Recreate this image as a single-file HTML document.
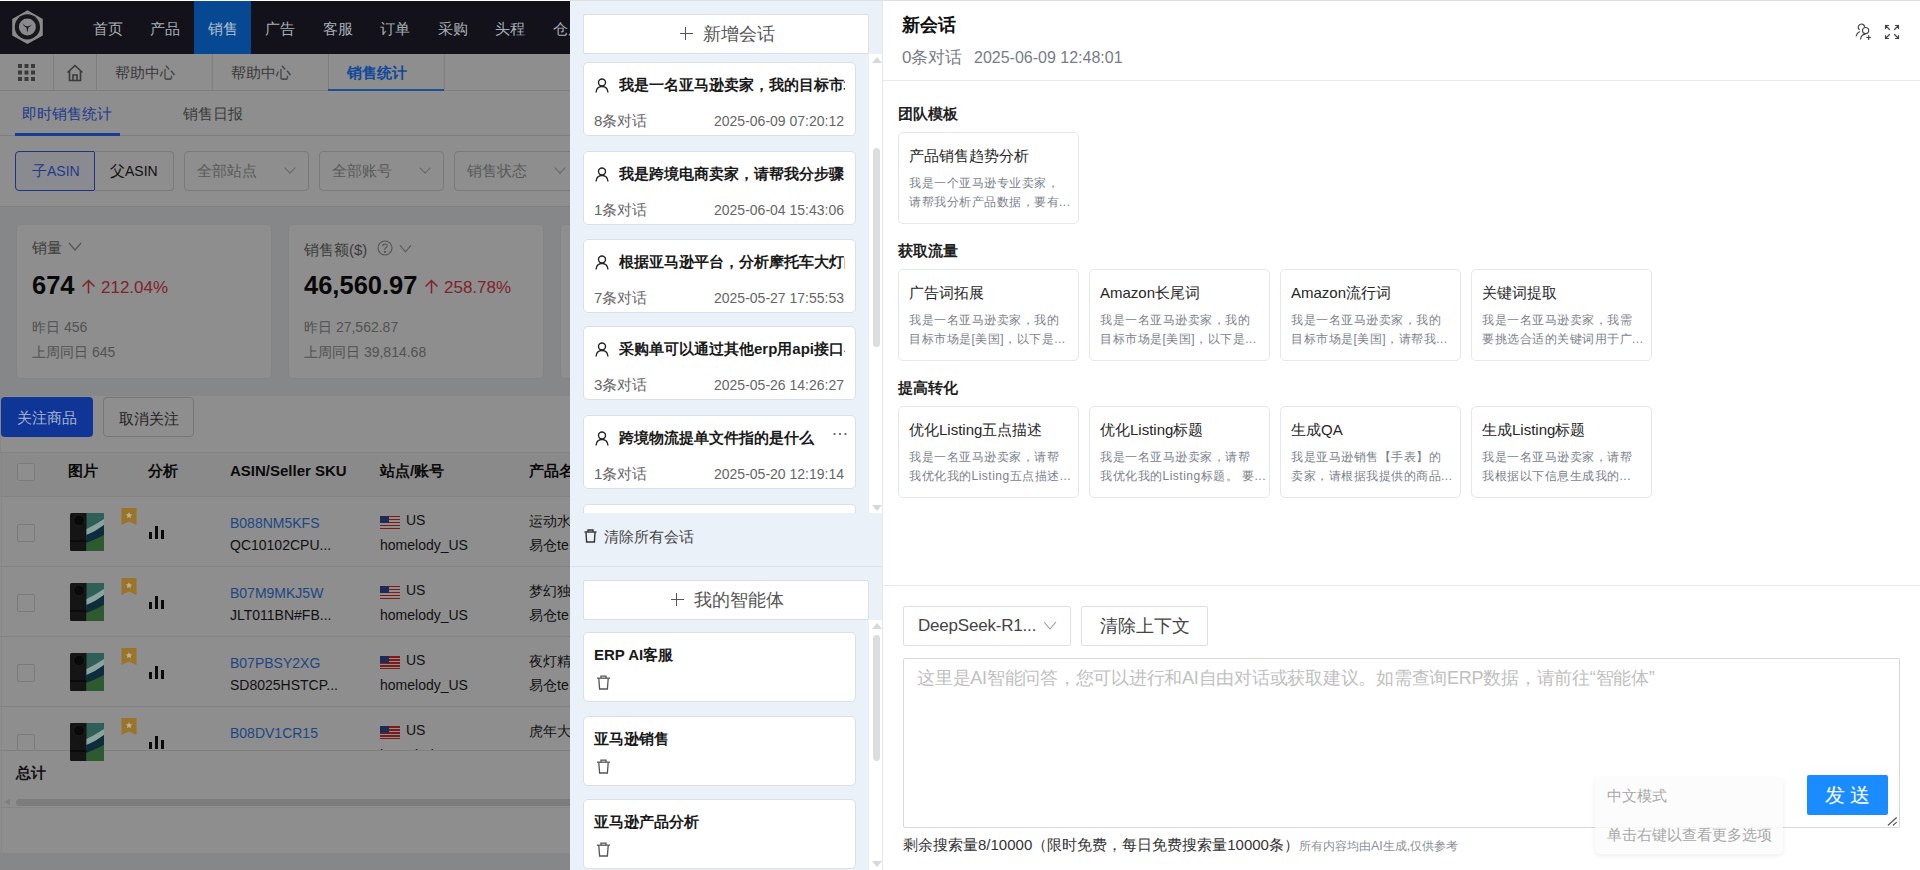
<!DOCTYPE html>
<html><head><meta charset="utf-8">
<style>
*{box-sizing:border-box;margin:0;padding:0}
html,body{width:1920px;height:870px;overflow:hidden;background:#fff;font-family:"Liberation Sans",sans-serif;}
.abs{position:absolute}
#page{position:absolute;left:0;top:0;width:570px;height:870px;overflow:hidden;background:#868789}
#topline{position:absolute;left:0;top:0;width:570px;height:1px;background:#fff}
#nav{position:absolute;left:0;top:1px;width:570px;height:53px;background:#13121a}
.mi{position:absolute;top:1px;height:52px;line-height:53px;font-size:15px;color:#a9afb6;width:57.5px;text-align:center}
.mi.on{background:#064891;color:#b4c0cc;top:0;height:53px;line-height:55px}
#tabs{position:absolute;left:0;top:54px;width:570px;height:37px;background:#8e8e8e;border-bottom:1px solid #7e7e7e}
.tsep{position:absolute;top:0;width:1px;height:37px;background:#7f7f7f}
.tt{position:absolute;top:1px;line-height:36px;font-size:15px;color:#3a3a3a}
#filter{position:absolute;left:0;top:91px;width:570px;height:116px;background:#8e8e8e;border-bottom:1px solid #808080}
.sel{position:absolute;top:151px;height:40px;border:1px solid #7a7a7a;border-radius:4px;font-size:15px;line-height:38px;color:#5a5a5a;padding-left:12px}
.chev{position:absolute;width:8px;height:8px;border-right:1px solid #666;border-bottom:1px solid #666;transform:rotate(45deg)}
.scard{position:absolute;top:224px;height:155px;background:#8e8e8e;border-radius:4px;border:1px solid #858585}
.sc-t{position:absolute;left:15px;top:14px;font-size:15px;color:#3c3c3c}
.sc-n{position:absolute;left:15px;top:46px;font-size:25.5px;font-weight:bold;color:#080808}
.sc-p{position:absolute;top:53px;font-size:17px;color:#80232a;white-space:nowrap}
.sc-s{position:absolute;left:15px;font-size:14px;color:#525252}
.btn{position:absolute;top:397px;height:40px;line-height:41px;border-radius:4px;font-size:15px;text-align:center}
#table{position:absolute;left:0;top:452px;width:570px;height:402px;background:#8e8e8e;border-radius:0 0 4px 4px}
.th{position:absolute;top:-3px;white-space:nowrap;line-height:44px;font-size:15px;font-weight:bold;color:#0a0a0a}
.row{position:absolute;left:0;width:570px;height:71px;border-bottom:1px solid #828282}
.cb{position:absolute;left:17px;width:18px;height:18px;border:1px solid #7b7b7b;border-radius:2px;background:#8e8e8e}
.pimg{position:absolute;left:69px;width:36px;height:38px;border-radius:2px;background:linear-gradient(90deg,#1a1c1c 0,#1a1c1c 40%,#3f6e5f 45%,#6a9a85 70%,#2a4d44 100%)}
.bm{position:absolute;left:121px;width:16px;height:18px;background:#b58f3e;clip-path:polygon(0 0,100% 0,100% 100%,50% 75%,0 100%)}
.bars{position:absolute;left:148px;width:16px;height:14px}
.bars i{position:absolute;bottom:0;width:3px;background:#0a0a0a}
.asin{position:absolute;left:230px;font-size:14px;color:#1d4684}
.sku{position:absolute;left:230px;font-size:14px;color:#111}
.site{position:absolute;left:380px;font-size:14px;color:#111}
.flag{position:absolute;left:380px;width:20px;height:13px;background:repeating-linear-gradient(#7e1a1a 0,#7e1a1a 1.5px,#8e8e8e 1.5px,#8e8e8e 3px)}
.flag:before{content:"";position:absolute;left:0;top:0;width:9px;height:7px;background:#1d2b55}
.pname{position:absolute;left:529px;font-size:14px;color:#111;white-space:nowrap}

#drawer{position:absolute;left:570px;top:0;width:1350px;height:870px;background:#ebf1f9}
#dtop{position:absolute;left:0;top:0;width:1350px;height:1px;background:#dcdfe3}
#lcol{position:absolute;left:1px;top:1px;width:311px;height:869px;background:#ebf1f9}
#rpan{position:absolute;left:312px;top:1px;width:1038px;height:869px;background:#fff;border-left:1px solid #e4e7ed}
.addbtn{position:absolute;left:12px;width:286px;height:40px;background:#fff;border:1px solid #dcdfe6;border-radius:2px;font-size:18px;color:#555;text-align:center;line-height:38px}
.addbtn b{display:inline-block;width:13px;height:13px;margin-right:12px;vertical-align:middle;position:relative;top:-2px;left:2px;background:linear-gradient(#555,#555) center/13px 1.3px no-repeat,linear-gradient(#555,#555) center/1.3px 13px no-repeat}
.sess{position:absolute;left:12px;width:273px;height:74px;background:#fff;border:1px solid #dcdfe6;border-radius:5px;overflow:hidden}
.s-ic{position:absolute;left:11px;top:15px;width:14px;height:15px}
.s-t{position:absolute;left:35px;top:13px;width:226px;white-space:nowrap;overflow:hidden;font-size:15px;font-weight:bold;color:#1a1a1a;line-height:18px}
.s-c{position:absolute;left:10px;top:50px;font-size:15px;color:#666;line-height:16px}
.s-d{position:absolute;right:11px;top:50px;font-size:14px;color:#666;line-height:16px}
.vscroll{position:absolute;left:299px;width:13px}
.agent{position:absolute;left:12px;width:273px;height:70px;background:#fff;border:1px solid #dcdfe6;border-radius:5px}
.a-t{position:absolute;left:10px;top:13px;font-size:15px;font-weight:bold;color:#1a1a1a;line-height:18px}
.trash{position:absolute;left:12px;top:42px;width:15px;height:15px}

.sec{position:absolute;left:15px;font-size:15px;font-weight:bold;color:#1f1f1f;line-height:18px}
.tpl{position:absolute;width:181px;height:92px;border:1px solid #e4e7ed;border-radius:5px;background:#fff}
.tp-t{position:absolute;left:10px;top:14px;font-size:15px;color:#262626;line-height:18px;white-space:nowrap}
.tp-d{position:absolute;left:10px;top:40.5px;font-size:12px;letter-spacing:0.5px;color:#7c828b;line-height:19.5px;white-space:nowrap}
</style></head><body>

<div id="page">
  <div id="topline"></div>
  <div id="nav">
    <svg class="abs" style="left:10px;top:8px" width="36" height="37" viewBox="0 0 36 37">
      <polygon points="17.5,1.3 32.8,10 32.8,26.5 17.5,35 2.2,26.5 2.2,10" fill="#8a8a8a"/>
      <circle cx="17.4" cy="17.9" r="12.6" fill="#17161d"/>
      <circle cx="17.4" cy="17.9" r="8.5" fill="#8a8a8a"/>
      <path d="M12.2 13.4 Q13.8 16.6 16.2 17.3 L18.6 17.3 Q20.8 16.6 22 15.2 Q21 17.6 18.4 18.6 L17.4 23.8 L16.4 18.6 Q13.4 17.4 12.2 13.4 Z" fill="#17161d"/>
    </svg>
    <div class="mi" style="left:79px">首页</div>
    <div class="mi" style="left:136.5px">产品</div>
    <div class="mi on" style="left:194px;width:57px">销售</div>
    <div class="mi" style="left:251.5px">广告</div>
    <div class="mi" style="left:309px">客服</div>
    <div class="mi" style="left:366.5px">订单</div>
    <div class="mi" style="left:424px">采购</div>
    <div class="mi" style="left:481.5px">头程</div>
    <div class="mi" style="left:539px">仓库</div>
  </div>
  <div id="tabs">
    <svg class="abs" style="left:18px;top:10px" width="17" height="17" viewBox="0 0 17 17" fill="#3a3a3a">
      <rect x="0" y="0" width="4" height="4"/><rect x="6.5" y="0" width="4" height="4"/><rect x="13" y="0" width="4" height="4"/>
      <rect x="0" y="6.5" width="4" height="4"/><rect x="6.5" y="6.5" width="4" height="4"/><rect x="13" y="6.5" width="4" height="4"/>
      <rect x="0" y="13" width="4" height="4"/><rect x="6.5" y="13" width="4" height="4"/><rect x="13" y="13" width="4" height="4"/>
    </svg>
    <div class="tsep" style="left:53px"></div>
    <svg class="abs" style="left:66px;top:10px" width="18" height="18" viewBox="0 0 18 18" fill="none" stroke="#3a3a3a" stroke-width="1.6">
      <path d="M1.5 8.5 L9 1.5 L16.5 8.5"/><path d="M3.5 7 V16.5 H14.5 V7"/><path d="M7 16.5 V11 H11 V16.5"/>
    </svg>
    <div class="tsep" style="left:96px"></div>
    <div class="tt" style="left:115px">帮助中心</div>
    <div class="tsep" style="left:212px"></div>
    <div class="tt" style="left:231px">帮助中心</div>
    <div class="tsep" style="left:328px"></div>
    <div class="tt" style="left:347px;color:#10489a;font-weight:bold">销售统计</div>
    <div class="abs" style="left:328px;top:34.5px;width:117px;height:2.5px;background:#1d4f96"></div>
    <div class="tsep" style="left:444px"></div>
  </div>
  <div id="filter">
    <div class="abs" style="left:22px;top:14px;font-size:15px;color:#1b3a8f;font-weight:500">即时销售统计</div>
    <div class="abs" style="left:183px;top:14px;font-size:15px;color:#3a3a3a">销售日报</div>
    <div class="abs" style="left:0;top:44px;width:570px;height:1px;background:#7f7f7f"></div>
    <div class="abs" style="left:15px;top:42px;width:105px;height:3px;background:#1b3a96"></div>
  </div>
  <div class="sel" style="left:15px;width:80px;border-color:#1d3580;background:#8a8b91;color:#1d3a8a;border-radius:4px 0 0 4px;padding-left:16px">子<span style="font-size:14px">ASIN</span></div>
  <div class="sel" style="left:94px;width:80px;color:#111;border-radius:0 4px 4px 0;padding-left:16px;border-left:none">父<span style="font-size:14px">ASIN</span></div>
  <div class="sel" style="left:184px;width:125px">全部站点<i class="chev" style="left:101px;top:12px"></i></div>
  <div class="sel" style="left:319px;width:125px">全部账号<i class="chev" style="left:101px;top:12px"></i></div>
  <div class="sel" style="left:454px;width:125px">销售状态<i class="chev" style="left:101px;top:12px"></i></div>

  <div class="scard" style="left:16px;width:256px">
    <div class="sc-t">销量<svg style="position:relative;top:-2px;margin-left:6px" width="14" height="9" viewBox="0 0 14 9" fill="none" stroke="#555" stroke-width="1.2"><path d="M1 1 L7 8 L13 1"/></svg></div>
    <div class="sc-n">674</div>
    <div class="sc-p" style="left:64px"><svg style="position:relative;top:1px;margin-right:5px" width="15" height="15" viewBox="0 0 15 15" fill="none" stroke="#80232a" stroke-width="1.5"><path d="M7.5 14.5 V1.5 M1.5 7.5 L7.5 1.5 L13.5 7.5"/></svg>212.04%</div>
    <div class="sc-s" style="top:94px">昨日 456</div>
    <div class="sc-s" style="top:119px">上周同日 645</div>
  </div>
  <div class="scard" style="left:288px;width:256px">
    <div class="sc-t">销售额($) <svg style="position:relative;top:1px;margin-left:5px" width="16" height="16" viewBox="0 0 16 16" fill="none" stroke="#555" stroke-width="1.1"><circle cx="8" cy="8" r="7"/><path d="M5.8 6.2 Q5.8 4 8 4 Q10.2 4 10.2 6 Q10.2 7.3 8 8.3 V9.8"/><circle cx="8" cy="11.9" r="0.5" fill="#555"/></svg><svg style="position:relative;top:-2px;margin-left:6px" width="13" height="9" viewBox="0 0 14 9" fill="none" stroke="#555" stroke-width="1.2"><path d="M1 1 L7 8 L13 1"/></svg></div>
    <div class="sc-n">46,560.97</div>
    <div class="sc-p" style="left:135px"><svg style="position:relative;top:1px;margin-right:5px" width="15" height="15" viewBox="0 0 15 15" fill="none" stroke="#80232a" stroke-width="1.5"><path d="M7.5 14.5 V1.5 M1.5 7.5 L7.5 1.5 L13.5 7.5"/></svg>258.78%</div>
    <div class="sc-s" style="top:94px">昨日 27,562.87</div>
    <div class="sc-s" style="top:119px">上周同日 39,814.68</div>
  </div>
  <div class="scard" style="left:560px;width:256px"></div>

  <div class="abs" style="left:1px;top:396px;width:580px;height:458px;background:#8e8e8e;border-radius:4px"></div>
  <div class="btn" style="left:1px;width:92px;background:#0f3597;color:#a9b4d0">关注商品</div>
  <div class="btn" style="left:103px;width:91px;border:1px solid #777;color:#222">取消关注</div>

  <div id="table">
    <div class="abs" style="left:0;top:0;width:570px;height:45px;border-bottom:1px solid #828282;background:#8a8a8a"></div>
    <div class="cb" style="top:11px"></div>
    <div class="th" style="left:68px">图片</div>
    <div class="th" style="left:148px">分析</div>
    <div class="th" style="left:230px">ASIN/Seller SKU</div>
    <div class="th" style="left:380px">站点/账号</div>
    <div class="th" style="left:529px">产品名</div>
    <div id="rows"><div class="row" style="top:44px"></div>
<div class="cb" style="top:72px"></div>
<svg class="abs" style="left:70px;top:61px" width="34" height="38" viewBox="0 0 34 38"><defs><clipPath id="c0"><rect width="34" height="38" rx="1.5"/></clipPath></defs><g clip-path="url(#c0)"><rect width="34" height="38" fill="#151515"/><circle cx="9" cy="7.5" r="5.5" fill="#0a0a0a" stroke="#1e1e1e" stroke-width="1"/><path d="M16.5 0 H34 V38 H16.5 Z" fill="#2f6058"/><path d="M16.5 16 Q25 12 34 6 V12 Q25 20 16.5 22 Z" fill="#8aa39f"/><path d="M16.5 22 Q26 18 34 12 V22 Q26 28 16.5 30 Z" fill="#0d2d3d"/><path d="M16.5 30 Q26 26 34 22 V38 H16.5 Z" fill="#2d5a2e"/><rect x="0" y="27" width="16.5" height="2" fill="#0b0b0b"/></g></svg>
<svg class="abs" style="left:121px;top:56px" width="16" height="17" viewBox="0 0 16 17"><path d="M0.5 0 H15.5 V17 L8 13.5 L0.5 17 Z" fill="#9a7428"/><path d="M8 4 L9 6.3 L11.4 6.4 L9.5 7.9 L10.2 10.3 L8 9 L5.8 10.3 L6.5 7.9 L4.6 6.4 L7 6.3 Z" fill="#b9b2a0"/></svg>
<div class="bars" style="left:149px;top:73px"><i style="left:0;height:7.5px"></i><i style="left:6px;height:13px"></i><i style="left:12px;height:9.5px"></i></div>
<div class="asin" style="top:63px">B088NM5KFS</div>
<div class="sku" style="top:85px">QC10102CPU...</div>
<div class="flag" style="top:64px"></div>
<div class="site" style="left:406px;top:60px">US</div>
<div class="site" style="top:85px">homelody_US</div>
<div class="pname" style="top:61px">运动水</div>
<div class="pname" style="top:85px">易仓te</div>
<div class="row" style="top:114px"></div>
<div class="cb" style="top:142px"></div>
<svg class="abs" style="left:70px;top:131px" width="34" height="38" viewBox="0 0 34 38"><defs><clipPath id="c1"><rect width="34" height="38" rx="1.5"/></clipPath></defs><g clip-path="url(#c1)"><rect width="34" height="38" fill="#151515"/><circle cx="9" cy="7.5" r="5.5" fill="#0a0a0a" stroke="#1e1e1e" stroke-width="1"/><path d="M16.5 0 H34 V38 H16.5 Z" fill="#2f6058"/><path d="M16.5 16 Q25 12 34 6 V12 Q25 20 16.5 22 Z" fill="#8aa39f"/><path d="M16.5 22 Q26 18 34 12 V22 Q26 28 16.5 30 Z" fill="#0d2d3d"/><path d="M16.5 30 Q26 26 34 22 V38 H16.5 Z" fill="#2d5a2e"/><rect x="0" y="27" width="16.5" height="2" fill="#0b0b0b"/></g></svg>
<svg class="abs" style="left:121px;top:126px" width="16" height="17" viewBox="0 0 16 17"><path d="M0.5 0 H15.5 V17 L8 13.5 L0.5 17 Z" fill="#9a7428"/><path d="M8 4 L9 6.3 L11.4 6.4 L9.5 7.9 L10.2 10.3 L8 9 L5.8 10.3 L6.5 7.9 L4.6 6.4 L7 6.3 Z" fill="#b9b2a0"/></svg>
<div class="bars" style="left:149px;top:143px"><i style="left:0;height:7.5px"></i><i style="left:6px;height:13px"></i><i style="left:12px;height:9.5px"></i></div>
<div class="asin" style="top:133px">B07M9MKJ5W</div>
<div class="sku" style="top:155px">JLT011BN#FB...</div>
<div class="flag" style="top:134px"></div>
<div class="site" style="left:406px;top:130px">US</div>
<div class="site" style="top:155px">homelody_US</div>
<div class="pname" style="top:131px">梦幻独</div>
<div class="pname" style="top:155px">易仓te</div>
<div class="row" style="top:184px"></div>
<div class="cb" style="top:212px"></div>
<svg class="abs" style="left:70px;top:201px" width="34" height="38" viewBox="0 0 34 38"><defs><clipPath id="c2"><rect width="34" height="38" rx="1.5"/></clipPath></defs><g clip-path="url(#c2)"><rect width="34" height="38" fill="#151515"/><circle cx="9" cy="7.5" r="5.5" fill="#0a0a0a" stroke="#1e1e1e" stroke-width="1"/><path d="M16.5 0 H34 V38 H16.5 Z" fill="#2f6058"/><path d="M16.5 16 Q25 12 34 6 V12 Q25 20 16.5 22 Z" fill="#8aa39f"/><path d="M16.5 22 Q26 18 34 12 V22 Q26 28 16.5 30 Z" fill="#0d2d3d"/><path d="M16.5 30 Q26 26 34 22 V38 H16.5 Z" fill="#2d5a2e"/><rect x="0" y="27" width="16.5" height="2" fill="#0b0b0b"/></g></svg>
<svg class="abs" style="left:121px;top:196px" width="16" height="17" viewBox="0 0 16 17"><path d="M0.5 0 H15.5 V17 L8 13.5 L0.5 17 Z" fill="#9a7428"/><path d="M8 4 L9 6.3 L11.4 6.4 L9.5 7.9 L10.2 10.3 L8 9 L5.8 10.3 L6.5 7.9 L4.6 6.4 L7 6.3 Z" fill="#b9b2a0"/></svg>
<div class="bars" style="left:149px;top:213px"><i style="left:0;height:7.5px"></i><i style="left:6px;height:13px"></i><i style="left:12px;height:9.5px"></i></div>
<div class="asin" style="top:203px">B07PBSY2XG</div>
<div class="sku" style="top:225px">SD8025HSTCP...</div>
<div class="flag" style="top:204px"></div>
<div class="site" style="left:406px;top:200px">US</div>
<div class="site" style="top:225px">homelody_US</div>
<div class="pname" style="top:201px">夜灯精</div>
<div class="pname" style="top:225px">易仓te</div>
<div class="row" style="top:254px"></div>
<div class="cb" style="top:282px"></div>
<svg class="abs" style="left:70px;top:271px" width="34" height="38" viewBox="0 0 34 38"><defs><clipPath id="c3"><rect width="34" height="38" rx="1.5"/></clipPath></defs><g clip-path="url(#c3)"><rect width="34" height="38" fill="#151515"/><circle cx="9" cy="7.5" r="5.5" fill="#0a0a0a" stroke="#1e1e1e" stroke-width="1"/><path d="M16.5 0 H34 V38 H16.5 Z" fill="#2f6058"/><path d="M16.5 16 Q25 12 34 6 V12 Q25 20 16.5 22 Z" fill="#8aa39f"/><path d="M16.5 22 Q26 18 34 12 V22 Q26 28 16.5 30 Z" fill="#0d2d3d"/><path d="M16.5 30 Q26 26 34 22 V38 H16.5 Z" fill="#2d5a2e"/><rect x="0" y="27" width="16.5" height="2" fill="#0b0b0b"/></g></svg>
<svg class="abs" style="left:121px;top:266px" width="16" height="17" viewBox="0 0 16 17"><path d="M0.5 0 H15.5 V17 L8 13.5 L0.5 17 Z" fill="#9a7428"/><path d="M8 4 L9 6.3 L11.4 6.4 L9.5 7.9 L10.2 10.3 L8 9 L5.8 10.3 L6.5 7.9 L4.6 6.4 L7 6.3 Z" fill="#b9b2a0"/></svg>
<div class="bars" style="left:149px;top:283px"><i style="left:0;height:7.5px"></i><i style="left:6px;height:13px"></i><i style="left:12px;height:9.5px"></i></div>
<div class="asin" style="top:273px">B08DV1CR15</div>
<div class="sku" style="top:295px">MQ-LSJ22PKZ...</div>
<div class="flag" style="top:274px"></div>
<div class="site" style="left:406px;top:270px">US</div>
<div class="site" style="top:295px">homelody_US</div>
<div class="pname" style="top:271px">虎年大</div>
<div class="pname" style="top:295px">HUNL</div></div>
  </div>
  <div class="abs" style="left:0;top:750px;width:570px;height:50px;background:#8e8e8e;border-top:1px solid #808080"></div>
  <div class="abs" style="left:16px;top:764px;font-size:15px;font-weight:bold;color:#111">总计</div>
  <div class="abs" style="left:16px;top:799px;width:560px;height:7px;border-radius:4px;background:#7c7c7c"></div>
  <div class="abs" style="left:4px;top:799px;width:0;height:0;border-top:3.5px solid transparent;border-bottom:3.5px solid transparent;border-right:6px solid #7e7e7e"></div>
  <div class="abs" style="left:0;top:807px;width:570px;height:1px;background:#868686"></div>
  <svg class="abs" style="left:70px;top:723px" width="34" height="38" viewBox="0 0 34 38"><defs><clipPath id="c9"><rect width="34" height="38" rx="1.5"/></clipPath></defs><g clip-path="url(#c9)"><rect width="34" height="38" fill="#151515"/><circle cx="9" cy="7.5" r="5.5" fill="#0a0a0a" stroke="#1e1e1e" stroke-width="1"/><path d="M16.5 0 H34 V38 H16.5 Z" fill="#2f6058"/><path d="M16.5 16 Q25 12 34 6 V12 Q25 20 16.5 22 Z" fill="#8aa39f"/><path d="M16.5 22 Q26 18 34 12 V22 Q26 28 16.5 30 Z" fill="#0d2d3d"/><path d="M16.5 30 Q26 26 34 22 V38 H16.5 Z" fill="#2d5a2e"/><rect x="0" y="27" width="16.5" height="2" fill="#0b0b0b"/></g></svg>
  <div class="abs" style="left:0;top:853px;width:570px;height:17px;background:#868789"></div>
  <div class="abs" style="left:0;top:452px;width:570px;height:1px;background:#848484"></div>
  <div class="abs" style="left:1px;top:452px;width:1px;height:400px;background:#878787"></div>
</div>

<div id="drawer">
  <div id="dtop"></div>
  <div id="lcol">
    <div class="addbtn" style="top:13px"><b></b>新增会话</div>
    <div id="sesslist" class="abs" style="left:0;top:53px;width:311px;height:459px;overflow:hidden"><div class="sess" style="top:8.399999999999999px"><svg class="s-ic" viewBox="0 0 14 15" fill="none" stroke="#222" stroke-width="1.4"><circle cx="7" cy="4.5" r="3.5"/><path d="M1 14.5 Q1.5 8.5 7 8.5 Q12.5 8.5 13 14.5"/></svg><div class="s-t">我是一名亚马逊卖家，我的目标市场是美国</div><div class="s-c">8条对话</div><div class="s-d">2025-06-09 07:20:12</div></div><div class="sess" style="top:96.69999999999999px"><svg class="s-ic" viewBox="0 0 14 15" fill="none" stroke="#222" stroke-width="1.4"><circle cx="7" cy="4.5" r="3.5"/><path d="M1 14.5 Q1.5 8.5 7 8.5 Q12.5 8.5 13 14.5"/></svg><div class="s-t">我是跨境电商卖家，请帮我分步骤</div><div class="s-c">1条对话</div><div class="s-d">2025-06-04 15:43:06</div></div><div class="sess" style="top:184.9px"><svg class="s-ic" viewBox="0 0 14 15" fill="none" stroke="#222" stroke-width="1.4"><circle cx="7" cy="4.5" r="3.5"/><path d="M1 14.5 Q1.5 8.5 7 8.5 Q12.5 8.5 13 14.5"/></svg><div class="s-t">根据亚马逊平台，分析摩托车大灯的</div><div class="s-c">7条对话</div><div class="s-d">2025-05-27 17:55:53</div></div><div class="sess" style="top:272px"><svg class="s-ic" viewBox="0 0 14 15" fill="none" stroke="#222" stroke-width="1.4"><circle cx="7" cy="4.5" r="3.5"/><path d="M1 14.5 Q1.5 8.5 7 8.5 Q12.5 8.5 13 14.5"/></svg><div class="s-t">采购单可以通过其他erp用api接口导入</div><div class="s-c">3条对话</div><div class="s-d">2025-05-26 14:26:27</div></div><div class="sess" style="top:361.3px"><svg class="s-ic" viewBox="0 0 14 15" fill="none" stroke="#222" stroke-width="1.4"><circle cx="7" cy="4.5" r="3.5"/><path d="M1 14.5 Q1.5 8.5 7 8.5 Q12.5 8.5 13 14.5"/></svg><div class="s-t">跨境物流提单文件指的是什么</div><div class="s-c">1条对话</div><div class="s-d">2025-05-20 12:19:14</div><svg class="abs" style="left:249px;top:16px" width="14" height="4" viewBox="0 0 14 4" fill="#555"><circle cx="1.5" cy="2" r="1.1"/><circle cx="7" cy="2" r="1.1"/><circle cx="12.5" cy="2" r="1.1"/></svg></div><div class="sess" style="top:449.5px"><svg class="s-ic" viewBox="0 0 14 15" fill="none" stroke="#222" stroke-width="1.4"><circle cx="7" cy="4.5" r="3.5"/><path d="M1 14.5 Q1.5 8.5 7 8.5 Q12.5 8.5 13 14.5"/></svg><div class="s-t"></div><div class="s-c"></div><div class="s-d"></div></div><div class="abs" style="left:298px;top:0;width:13px;height:459px;background:#fff"></div><div class="abs" style="left:301px;top:3px;width:0;height:0;border-left:5px solid transparent;border-right:5px solid transparent;border-bottom:6px solid #d6d9de"></div><div class="abs" style="left:301.5px;top:94px;width:7px;height:199px;border-radius:4px;background:#dcdddf"></div><div class="abs" style="left:301px;top:451px;width:0;height:0;border-left:5px solid transparent;border-right:5px solid transparent;border-top:6px solid #d6d9de"></div></div>
    <svg class="abs" style="left:13px;top:528px" width="13" height="14" viewBox="0 0 13 14" fill="none" stroke="#333" stroke-width="1.4"><path d="M0.5 3 H12.5"/><path d="M4 2.8 V1 H9 V2.8"/><path d="M2 3.2 L2.6 13 H10.4 L11 3.2"/></svg>
    <div class="abs" style="left:33px;top:527px;font-size:15px;color:#444;line-height:18px">清除所有会话</div>
    <div class="abs" style="left:0;top:565px;width:311px;height:1px;background:#dde3ec"></div>
    <div class="addbtn" style="top:579px;height:40px"><b></b>我的智能体</div>
    <div id="agentlist" class="abs" style="left:0;top:619px;width:311px;height:251px;overflow:hidden"><div class="agent" style="top:12px"><div class="a-t">ERP AI客服</div><svg class="trash" viewBox="0 0 15 15" fill="none" stroke="#555" stroke-width="1.3"><path d="M1 3.2 H14"/><path d="M5 3 V1.2 H10 V3"/><path d="M2.8 3.5 L3.6 14 H11.4 L12.2 3.5"/></svg></div><div class="agent" style="top:95.5px"><div class="a-t">亚马逊销售</div><svg class="trash" viewBox="0 0 15 15" fill="none" stroke="#555" stroke-width="1.3"><path d="M1 3.2 H14"/><path d="M5 3 V1.2 H10 V3"/><path d="M2.8 3.5 L3.6 14 H11.4 L12.2 3.5"/></svg></div><div class="agent" style="top:179px"><div class="a-t">亚马逊产品分析</div><svg class="trash" viewBox="0 0 15 15" fill="none" stroke="#555" stroke-width="1.3"><path d="M1 3.2 H14"/><path d="M5 3 V1.2 H10 V3"/><path d="M2.8 3.5 L3.6 14 H11.4 L12.2 3.5"/></svg></div><div class="abs" style="left:298px;top:0;width:13px;height:251px;background:#fff"></div><div class="abs" style="left:301px;top:3px;width:0;height:0;border-left:5px solid transparent;border-right:5px solid transparent;border-bottom:6px solid #d6d9de"></div><div class="abs" style="left:301.5px;top:15px;width:7px;height:126px;border-radius:4px;background:#dcdddf"></div><div class="abs" style="left:301px;top:241px;width:0;height:0;border-left:5px solid transparent;border-right:5px solid transparent;border-top:6px solid #d6d9de"></div></div>
  </div>
  <div id="rpan">
    <div class="abs" style="left:19px;top:13px;font-size:18px;font-weight:bold;color:#111;line-height:22px">新会话</div>
    <div class="abs" style="left:19px;top:47px;font-size:17px;color:#777d86;line-height:20px;white-space:nowrap">0条对话</div><div class="abs" style="left:91px;top:47px;font-size:16px;color:#777d86;line-height:20px;white-space:nowrap">2025-06-09 12:48:01</div>
    <div class="abs" style="left:0;top:79px;width:1037px;height:1px;background:#e8eaee"></div>
    <div class="sec" style="top:104px">团队模板</div>
    <div class="sec" style="top:241px">获取流量</div>
    <div class="sec" style="top:378px">提高转化</div>
    <div class="tpl" style="left:15px;top:131px"><div class="tp-t">产品销售趋势分析</div><div class="tp-d">我是一个亚马逊专业卖家，<br>请帮我分析产品数据，要有...</div></div><div class="tpl" style="left:15px;top:268px"><div class="tp-t">广告词拓展</div><div class="tp-d">我是一名亚马逊卖家，我的<br>目标市场是[美国]，以下是...</div></div><div class="tpl" style="left:206px;top:268px"><div class="tp-t">Amazon长尾词</div><div class="tp-d">我是一名亚马逊卖家，我的<br>目标市场是[美国]，以下是...</div></div><div class="tpl" style="left:397px;top:268px"><div class="tp-t">Amazon流行词</div><div class="tp-d">我是一名亚马逊卖家，我的<br>目标市场是[美国]，请帮我...</div></div><div class="tpl" style="left:588px;top:268px"><div class="tp-t">关键词提取</div><div class="tp-d">我是一名亚马逊卖家，我需<br>要挑选合适的关键词用于广...</div></div><div class="tpl" style="left:15px;top:405px"><div class="tp-t">优化Listing五点描述</div><div class="tp-d">我是一名亚马逊卖家，请帮<br>我优化我的Listing五点描述...</div></div><div class="tpl" style="left:206px;top:405px"><div class="tp-t">优化Listing标题</div><div class="tp-d">我是一名亚马逊卖家，请帮<br>我优化我的Listing标题。 要...</div></div><div class="tpl" style="left:397px;top:405px"><div class="tp-t">生成QA</div><div class="tp-d">我是亚马逊销售【手表】的<br>卖家，请根据我提供的商品...</div></div><div class="tpl" style="left:588px;top:405px"><div class="tp-t">生成Listing标题</div><div class="tp-d">我是一名亚马逊卖家，请帮<br>我根据以下信息生成我的...</div></div>
    <div class="abs" style="left:0;top:584px;width:1037px;height:1px;background:#e8eaee"></div>
    <div class="abs" style="left:20px;top:605px;width:168px;height:40px;border:1px solid #dcdfe6;border-radius:2px;font-size:17px;letter-spacing:-0.2px;color:#444;line-height:38px;padding-left:14px">DeepSeek-R1...<svg class="abs" style="left:139px;top:14px" width="14" height="9" viewBox="0 0 14 9" fill="none" stroke="#9a9a9a" stroke-width="1.1"><path d="M1 1 L7 8 L13 1"/></svg></div>
    <div class="abs" style="left:198px;top:605px;width:127px;height:40px;border:1px solid #dcdfe6;border-radius:2px;font-size:18px;color:#444;line-height:38px;text-align:center">清除上下文</div>
    <div class="abs" style="left:20px;top:657px;width:997px;height:170px;border:1px solid #d9d9d9;border-radius:2px"></div>
    <div class="abs" style="left:34px;top:666px;font-size:18px;letter-spacing:-0.25px;color:#c0c0c0;line-height:22px;white-space:nowrap">这里是AI智能问答，您可以进行和AI自由对话或获取建议。如需查询ERP数据，请前往“智能体”</div>
    <div class="abs" style="left:924px;top:774px;width:81px;height:40px;background:#1a8cff;color:#fff;font-size:20px;line-height:40px;text-align:center;border-radius:2px">发 送</div>
    <div class="abs" style="left:712px;top:776px;width:188px;height:77px;background:rgba(251,251,251,0.8);box-shadow:0 2px 5px rgba(0,0,0,0.07);border-radius:5px"></div>
    <div class="abs" style="left:724px;top:786px;font-size:15px;color:#a8a8a8;line-height:18px">中文模式</div>
    <div class="abs" style="left:724px;top:825px;font-size:15px;color:#a8a8a8;line-height:18px">单击右键以查看更多选项</div>
    <div class="abs" style="left:20px;top:835px;font-size:15px;color:#333;line-height:18px;white-space:nowrap">剩余搜索量8/10000（限时免费，每日免费搜索量10000条）<span style="font-size:12.4px;color:#8c8f96;margin-left:0px">所有内容均由AI生成,仅供参考</span></div>
    <svg class="abs" style="left:1004px;top:815px" width="11" height="11" viewBox="0 0 11 11" stroke="#555" stroke-width="1.2" stroke-linecap="round"><path d="M1.3 9 L9.4 1.8 M6.3 9 L9.4 6.4"/></svg>
    <svg class="abs" style="left:972px;top:22px" width="18" height="18" viewBox="0 0 18 18" fill="none" stroke="#444" stroke-width="1.2" stroke-linecap="round">
      <path d="M4.2 6.5 A3.2 3.2 0 1 1 9.6 3.6"/><path d="M1.2 13 Q1.8 9.8 4.6 8.8"/>
      <circle cx="10.6" cy="7.6" r="3.1"/><path d="M5.6 16 Q6.3 11.8 10 11.2"/>
      <path d="M11.8 14.5 H15.6 M13.7 12.6 V16.4"/>
    </svg>
    <svg class="abs" style="left:1001px;top:23px" width="16" height="16" viewBox="0 0 16 16" fill="none" stroke="#444" stroke-width="1.2" stroke-linecap="round">
      <path d="M1.5 1.5 L5.5 5.5 M1.5 1.5 H4.5 M1.5 1.5 V4.5"/><path d="M14.5 1.5 L10.5 5.5 M14.5 1.5 H11.5 M14.5 1.5 V4.5"/><path d="M1.5 14.5 L5.5 10.5 M1.5 14.5 H4.5 M1.5 14.5 V11.5"/><path d="M14.5 14.5 L10.5 10.5 M14.5 14.5 H11.5 M14.5 14.5 V11.5"/>
    </svg>
  </div>
</div>
</body></html>
